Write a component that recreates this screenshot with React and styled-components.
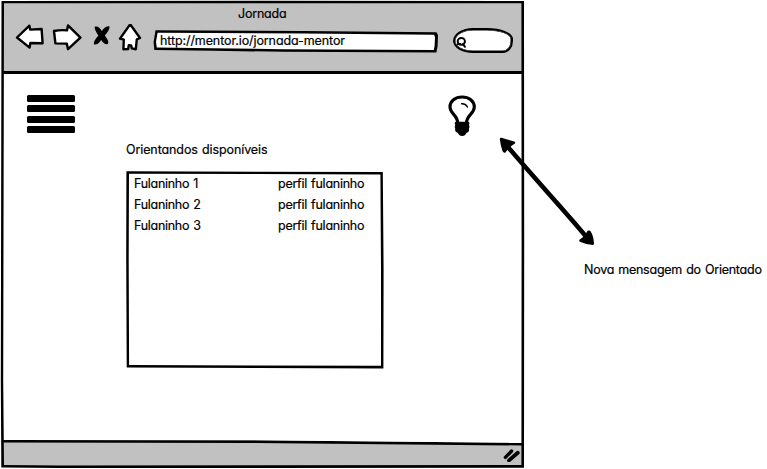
import React from "react";
import styled, { createGlobalStyle } from "styled-components";

const GlobalStyle = createGlobalStyle`
  * { box-sizing: border-box; }
  body { margin: 0; background: #fff; color: #000; overflow: hidden; }
`;

const Page = styled.div`
  position: relative;
  display: flex;
  width: 767px;
  height: 469px;
  font-family: Inter, "Open Sans", sans-serif;
  font-feature-settings: "cv11";
`;

const Label = styled.span`
  font-size: 12.5px;
  font-weight: 400;
  line-height: 20px;
  letter-spacing: ${(p) => p.$spacing || 0}px;
  word-spacing: 0.8px;
  white-space: nowrap;
  -webkit-text-stroke: 0.2px #000;
`;

/* Outline with slightly uneven edges, drawn over the window */
const BrowserWindow = styled.main`
  position: relative;
  display: flex;
  flex-direction: column;
  flex: none;
  width: 525px;
  height: 469px;
  padding: 2px;

  &::after {
    content: "";
    position: absolute;
    inset: 0;
    pointer-events: none;
    background: #000;
    clip-path: polygon(
      evenodd,
      1.5px 1px, 260px 0.7px, 524px 1px, 524.2px 240px, 524px 467.8px,
      260px 468px, 60px 468px, 1.3px 467.6px, 0.8px 380px, 1.5px 1px,
      4px 3.3px, 3.2px 380px, 4px 465px, 60px 465.4px, 260px 465.2px,
      521.4px 465px, 521.6px 240px, 521.4px 3.3px, 260px 3.3px, 4px 3.3px
    );
  }
`;

const Header = styled.header`
  display: flex;
  flex-direction: column;
  height: 72px;
  padding-top: 2px;
  background: #c1c1c1;
  border-bottom: 3px solid #000;
`;

const TitleBar = styled.div`
  height: 20px;
  padding-left: 236px;
  display: flex;
`;

const Toolbar = styled.div`
  display: flex;
  height: 34px;
  padding-left: 12px;
`;

const NavIcons = styled.svg`
  width: 130px;
  height: 34px;
  flex: none;
`;

const AddressField = styled.div`
  position: relative;
  display: flex;
  width: 285px;
  height: 24px;
  margin: 5px 0 0 9px;
  padding: 2px 0 0 7px;
  isolation: isolate;

  &::before,
  &::after {
    content: "";
    position: absolute;
    inset: 0;
    z-index: -1;
    background: #000;
    clip-path: polygon(2.5px 1.3px, 150px 2px, 283.4px 3.3px, 285px 6px, 284.6px 17px, 283.4px 23.6px, 130px 22.8px, 60px 21.7px, 1.3px 21px, 0.6px 13px);
  }
  &::after {
    background: #fff;
    clip-path: polygon(4.6px 3.7px, 150px 4.5px, 281px 5.7px, 282px 8px, 281.6px 17px, 280.8px 21px, 130px 20.2px, 60px 19.3px, 3.8px 18.5px, 3px 13px);
  }
`;

const SearchField = styled.div`
  display: flex;
  width: 60px;
  height: 25px;
  margin: 4px 0 0 14.5px;
  padding: 6px 0 0 0;
  background: #fff;
  border: 2px solid #000;
  box-shadow: inset 0 0 0 0.5px #000;
  border-radius: 20px 26px 10px 20px / 13px 11px 12px 12px;
`;

const Content = styled.section`
  position: relative;
  flex: 1;
  background: #fff;
  padding: 21px 45px 0 25px;
`;

const ContentTop = styled.div`
  display: flex;
  justify-content: space-between;
  height: 42px;
`;

const MenuButton = styled.div`
  width: 48px;
  height: 38px;
  display: flex;
  flex-direction: column;
  justify-content: space-between;
`;

const MenuBar = styled.i`
  height: 7px;
  border-radius: 1.5px;
  background: #000;
`;

const Mentees = styled.div`
  width: 260px;
  margin: 3px 0 0 99px;
  display: flex;
  flex-direction: column;
`;

const MenteeList = styled.div`
  position: relative;
  width: 260px;
  height: 199px;
  margin-top: 10px;
  padding: 4px 0 0 8px;

  &::after {
    content: "";
    position: absolute;
    inset: 0;
    pointer-events: none;
    background: #000;
    clip-path: polygon(
      evenodd,
      0.4px 1.2px, 130px 1.7px, 256.8px 2.1px, 257.6px 100px, 257.4px 198.4px,
      130px 198px, 0.7px 197.6px, 0.2px 90px, 0.4px 1.2px,
      3px 3.8px, 2.7px 90px, 3.1px 195.1px, 130px 195.4px, 255px 195.8px,
      255px 100px, 254.4px 4.5px, 130px 4.1px, 3px 3.8px
    );
  }
`;

const MenteeRow = styled.div`
  display: grid;
  grid-template-columns: 144px 1fr;
  height: 21px;
`;

const Footer = styled.footer`
  position: relative;
  display: flex;
  justify-content: flex-end;
  height: 29px;
  margin-top: -3px;
  padding: 10px 3px 0 0;
  background: #c1c1c1;
  clip-path: polygon(0 2px, 250px 2.3px, 521px 4.8px, 521px 29px, 0 29px);

  &::before {
    content: "";
    position: absolute;
    inset: 0;
    background: #000;
    clip-path: polygon(0 2px, 250px 2.3px, 521px 4.8px, 521px 7.5px, 250px 5px, 0 4.6px);
  }
`;

const Note = styled.aside`
  padding: 258px 0 0 59px;
`;

const PointerArrow = styled.svg`
  position: absolute;
  left: 480px;
  top: 125px;
  width: 130px;
  height: 130px;
`;

const mentees = ["Fulaninho 1", "Fulaninho 2", "Fulaninho 3"];

function Navigation() {
  return (
    <NavIcons viewBox="14 24 130 34">
      <g fill="#fff" stroke="#000" strokeWidth="2.4" strokeLinejoin="round">
        <path d="M17 37.5 29.4 25.7 30.2 29.6 41.6 29 42.6 43.2 30.4 43 29.6 47.6Z" />
        <path d="M54 31 Q61 29.6 67 30.4 L68 25.4 80.4 37.6 68 49.2 66.8 43.6 55.4 43.4Z" />
        <path d="M130.2 24.3 140 38 136.8 39.3 135.8 49.2 131.8 48.4 131.2 45.4 128.8 45.3 128.2 49 123.4 49.2 123.8 39.7 120 38.6Z" />
      </g>
      <path d="M94.8 26.6 Q98.8 25.4 101.8 31 Q105 25.8 109.4 26.2 Q110.4 29 104.8 35.6 Q109.6 41.6 107.8 44 Q104.2 45 101.2 40 Q97.6 45.2 94 44.4 Q93 41.2 98.4 35.4 Q94 29.6 94.8 26.6Z" />
    </NavIcons>
  );
}

function LightBulb() {
  return (
    <svg width="32" height="42" viewBox="446 95 32 42">
      <path
        d="M457.7 123 C457.7 115 450 114 450 107 C450 100.8 455.2 97 462.1 97 C469 97 474.3 100.8 474.3 107 C474.3 114 466.5 115 466.5 123"
        fill="none"
        stroke="#000"
        strokeWidth="3.1"
      />
      <path d="M461.6 103.8 Q465.6 103.4 467.4 107" fill="none" stroke="#000" strokeWidth="1.4" strokeLinecap="round" />
      <path d="M455.4 121.8 H468.8 Q470.2 123.4 469 125 Q470 127 469 128.8 Q469.6 132 466.4 133 Q465.4 136 462.2 136 Q459 136 458 133 Q454.6 132 455.2 128.8 Q454.2 127 455.2 125 Q454 123.4 455.4 121.8Z" />
    </svg>
  );
}

export default function App() {
  return (
    <Page>
      <GlobalStyle />
      <BrowserWindow>
        <Header>
          <TitleBar>
            <Label $spacing={-0.2}>Jornada</Label>
          </TitleBar>
          <Toolbar>
            <Navigation />
            <AddressField>
              <Label $spacing={-0.1}>http://mentor.io/jornada-mentor</Label>
            </AddressField>
            <SearchField>
              <svg width="14" height="14" viewBox="455.4 36 14 14" fill="none" stroke="#000" strokeWidth="2" strokeLinecap="round">
                <ellipse cx="461.7" cy="41.3" rx="3.6" ry="3.4" />
                <path d="M458 44.2 L460.5 44 M463.4 44.2 L465.4 46.8" />
              </svg>
            </SearchField>
          </Toolbar>
        </Header>
        <Content>
          <ContentTop>
            <MenuButton>
              <MenuBar />
              <MenuBar />
              <MenuBar />
              <MenuBar />
            </MenuButton>
            <LightBulb />
          </ContentTop>
          <Mentees>
            <Label $spacing={-0.1}>Orientandos disponíveis</Label>
            <MenteeList>
              {mentees.map((name) => (
                <MenteeRow key={name}>
                  <Label $spacing={-0.28}>{name}</Label>
                  <Label $spacing={-0.25}>perfil fulaninho</Label>
                </MenteeRow>
              ))}
            </MenteeList>
          </Mentees>
        </Content>
        <Footer>
          <svg width="18" height="14" viewBox="501.4 448.6 18 14" fill="none" stroke="#000" strokeLinecap="round">
            <path d="M504.8 458 L511 451.6" strokeWidth="3.4" />
            <path d="M508.4 461 L517.2 453.4" strokeWidth="3.8" />
          </svg>
        </Footer>
      </BrowserWindow>
      <Note>
        <Label $spacing={-0.24}>Nova mensagem do Orientado</Label>
      </Note>
      <PointerArrow viewBox="0 0 130 130" stroke="#000" strokeLinejoin="round">
        <path d="M25 18.5 C55 54 85 86 109 115" fill="none" strokeWidth="4.6" />
        <path d="M21 14 L34 17.6 Q28.6 20.6 24.6 26.6 L23.6 25.6 Q21.6 20 21 14Z" strokeWidth="2.4" />
        <path d="M112.8 118.7 Q112.4 111 109.4 106.6 L108.2 107 Q106 112 100.4 115.6 Q106 118.2 112.8 118.7Z" strokeWidth="2.4" />
      </PointerArrow>
    </Page>
  );
}
